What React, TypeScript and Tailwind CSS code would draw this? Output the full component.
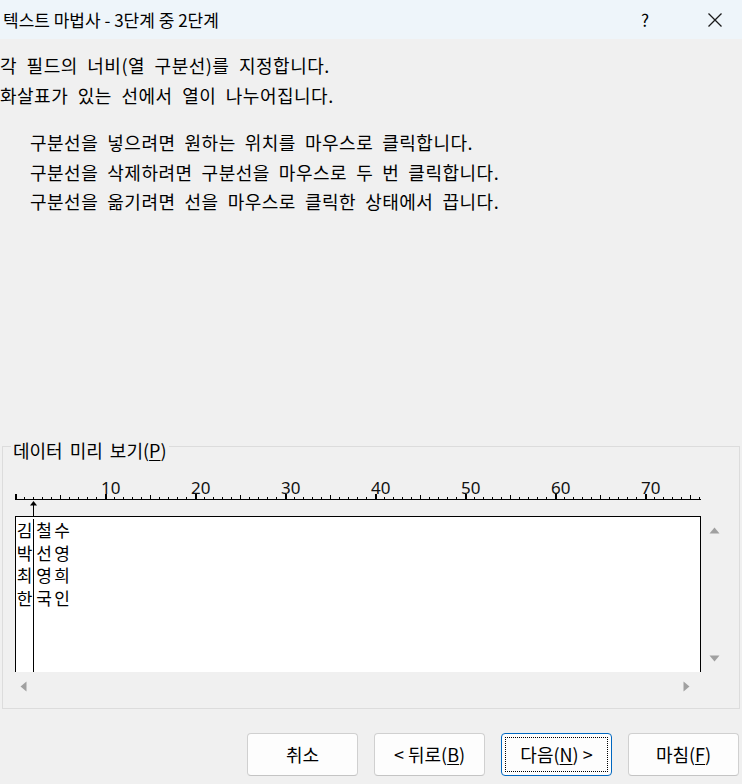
import React from "react";

const FONT = '"Noto Sans CJK KR", "Noto Sans", sans-serif';

const Ruler = () => {
  const ticks = [];
  for (let c = 0; c <= 76; c++) {
    const x = c * 9 + 0.5;
    if (c % 10 === 0) {
      ticks.push(<rect key={c} x={c * 9} y={32} width={2} height={6} fill="#000" />);
    } else if (c % 5 === 0) {
      ticks.push(<line key={c} x1={x} y1={33} x2={x} y2={38} stroke="#000" />);
    } else {
      ticks.push(<line key={c} x1={x} y1={35} x2={x} y2={38} stroke="#000" />);
    }
  }
  const labels = [10, 20, 30, 40, 50, 60, 70];
  return (
    <svg width="688" height="54" className="block">
      {ticks}
      <rect x="0" y="37" width="686" height="1" fill="#000" />
      {labels.map((n) => (
        <text
          key={n}
          x={n * 9 - 4}
          y={32}
          fontSize="17"
          fontFamily='"Noto Sans", sans-serif'
          fill="#111"
        >
          {n}
        </text>
      ))}
      <polygon points="18.5,39 15,43.5 22,43.5" fill="#000" />
      <line x1="18.5" y1="42" x2="18.5" y2="54" stroke="#000" />
    </svg>
  );
};

const rows = [
  ["김", "철수"],
  ["박", "선영"],
  ["최", "영희"],
  ["한", "국인"],
];

const Btn = ({ children, focused }: { children: React.ReactNode; focused?: boolean }) => (
  <button
    className={
      focused
        ? "w-[111px] h-[43px] rounded-[4px] bg-[#fdfdfd] border-[1.5px] border-[#0067c0] p-[3px] text-[18px] text-black"
        : "w-[111px] h-[43px] rounded-[4px] bg-[#fdfdfd] border border-[#d0d0d0] border-b-[#c4c4c4] p-[3px] text-[18px] text-black"
    }
  >
    <span
      className={
        focused
          ? "flex h-full w-full items-center justify-center border border-dotted border-black"
          : "flex h-full w-full items-center justify-center"
      }
    >
      {children}
    </span>
  </button>
);

export default function App() {
  return (
    <div
      className="w-[742px] h-[784px] bg-[#f0f0f0] flex flex-col text-black overflow-hidden"
      style={{ fontFamily: FONT }}
    >
      {/* title bar */}
      <div className="h-[39px] shrink-0 bg-[#eef5fa] flex items-center">
        <div className="pl-[3px] text-[17px] flex-1">텍스트 마법사 - 3단계 중 2단계</div>
        <div className="w-[30px] text-center text-[17px] mr-[40px]">?</div>
        <div className="w-[30px] flex justify-center mr-[12px]">
          <svg width="16" height="16" viewBox="0 0 16 16">
            <path d="M1.5 1.5 L14.5 14.5 M14.5 1.5 L1.5 14.5" stroke="#1a1a1a" strokeWidth="1.3" fill="none" />
          </svg>
        </div>
      </div>

      {/* instructions */}
      <div className="mt-[11px] text-[18px] leading-[30px] tracking-[0.5px] [word-spacing:5px]">
        <p>각 필드의 너비(열 구분선)를 지정합니다.</p>
        <p>화살표가 있는 선에서 열이 나누어집니다.</p>
      </div>
      <div className="mt-[18px] pl-[30px] text-[18px] leading-[29.5px] tracking-[0.5px] [word-spacing:4.5px]">
        <p>구분선을 넣으려면 원하는 위치를 마우스로 클릭합니다.</p>
        <p>구분선을 삭제하려면 구분선을 마우스로 두 번 클릭합니다.</p>
        <p>구분선을 옮기려면 선을 마우스로 클릭한 상태에서 끕니다.</p>
      </div>

      <div className="flex-1" />

      {/* data preview group */}
      <fieldset className="ml-[2px] w-[738px] border border-[#dcdcdc] shrink-0">
        <legend className="ml-[8px] px-[2px] pt-[8px] text-[18px] leading-[24px] [word-spacing:3px]">
          데이터 미리 보기(<span className="underline underline-offset-2">P</span>)
        </legend>
        <div className="pl-[12px]">
          <Ruler />
        </div>
        <div className="flex">
          <div className="ml-[12px] w-[686px] h-[156px] bg-white border-l border-t border-r border-black flex text-[17px] leading-[22.5px] pt-[2px]">
            <div className="w-[18px] h-full border-r border-black">
              {rows.map((r) => (
                <div key={r[0]} className="w-[17px] text-center">
                  {r[0]}
                </div>
              ))}
            </div>
            <div className="pl-[1px]">
              {rows.map((r) => (
                <div key={r[1]} className="flex">
                  {r[1].split("").map((ch, i) => (
                    <span key={i} className="w-[18px] text-center">
                      {ch}
                    </span>
                  ))}
                </div>
              ))}
            </div>
          </div>
          <div className="w-[26px] h-[156px] flex flex-col items-center justify-between pt-[11px] pb-[10px]">
            <svg width="11" height="7" viewBox="0 0 11 7">
              <polygon points="5.5,0.5 10.5,6.5 0.5,6.5" fill="#a0a0a0" />
            </svg>
            <svg width="11" height="7" viewBox="0 0 11 7">
              <polygon points="0.5,0.5 10.5,0.5 5.5,6.5" fill="#a0a0a0" />
            </svg>
          </div>
        </div>
        <div className="ml-[12px] w-[686px] h-[28px] flex items-center justify-between pl-[5px] pr-[11px]">
          <svg width="7" height="11" viewBox="0 0 7 11">
            <polygon points="6.5,0.5 6.5,10.5 0.5,5.5" fill="#a0a0a0" />
          </svg>
          <svg width="7" height="11" viewBox="0 0 7 11">
            <polygon points="0.5,0.5 0.5,10.5 6.5,5.5" fill="#a0a0a0" />
          </svg>
        </div>
        <div className="h-[8px]" />
      </fieldset>

      {/* buttons */}
      <div className="h-[75px] shrink-0 flex items-start justify-end gap-[16px] pr-[3px] pt-[24px]">
        <Btn>취소</Btn>
        <Btn>
          &lt; 뒤로(<span className="underline underline-offset-2">B</span>)
        </Btn>
        <Btn focused>
          다음(<span className="underline underline-offset-2">N</span>) &gt;
        </Btn>
        <Btn>
          마침(<span className="underline underline-offset-2">F</span>)
        </Btn>
      </div>
    </div>
  );
}
